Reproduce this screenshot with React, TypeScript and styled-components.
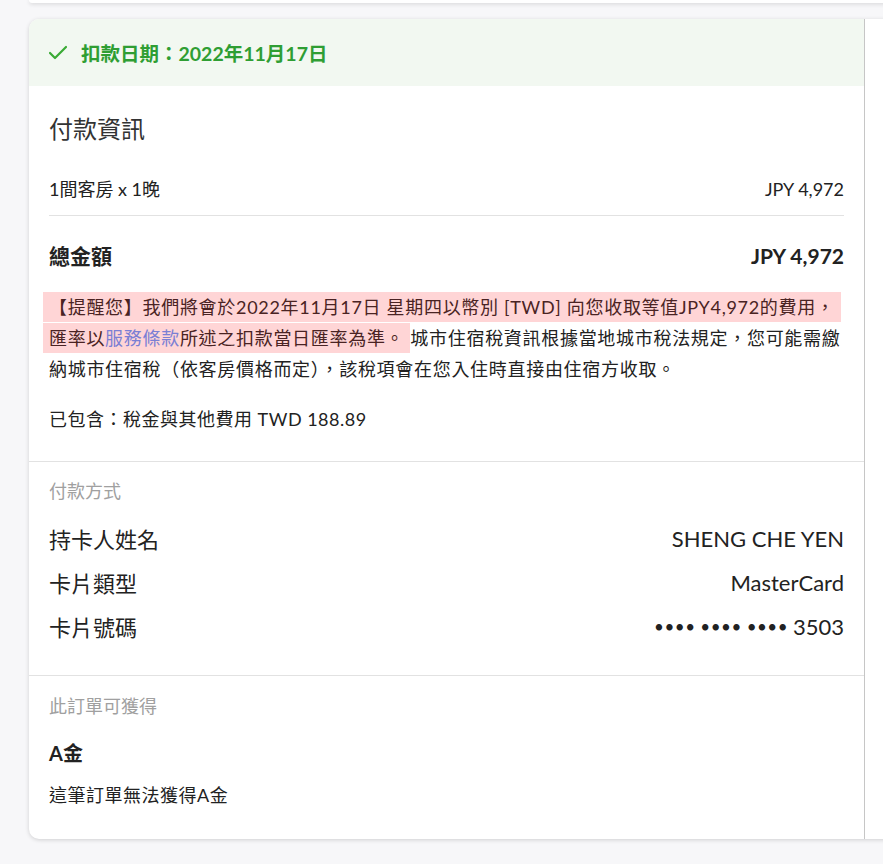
import React from "react";
import styled, {createGlobalStyle} from "styled-components";
import {Check} from "lucide-react";

const text = "#222222";
const muted = "#a0a0a0";
const line = "#e2e2e2";
const green = "#2f9e33";

const GlobalStyle = createGlobalStyle`
  html, body {
    margin: 0;
    padding: 0;
    background: #f7f7f9;
    overflow: hidden;
  }
  body {
    font-family: Lato, "Noto Sans CJK TC", "Noto Sans", sans-serif;
    color: ${text};
  }
`;

const Page = styled.div`
  width: 883px;
  height: 864px;
  padding-left: 29px;
  box-sizing: border-box;
  overflow: hidden;
`;

const PrevCard = styled.div`
  width: 880px;
  height: 3px;
  background: #ffffff;
  border-radius: 0 0 10px 10px;
  box-shadow: 0 1px 4px rgba(0, 0, 0, 0.16);
  margin-bottom: 16px;
`;

const Card = styled.div`
  display: flex;
  width: 880px;
  background: #ffffff;
  border-radius: 10px;
  box-shadow: 0 1px 4px rgba(0, 0, 0, 0.16);
  overflow: hidden;
`;

const MainColumn = styled.div`
  width: 835px;
  border-right: 1px solid #c6c6c6;
  flex-shrink: 0;
`;

const SideColumn = styled.div`
  flex: 1;
  background: #ffffff;
`;

const Banner = styled.div`
  display: flex;
  align-items: center;
  gap: 11px;
  height: 67px;
  padding: 0 17px;
  background: #f2f8f1;
  color: ${green};
  font-size: 19.5px;
  font-weight: 700;
`;

const Section = styled.div<{$top: number; $bottom: number; $last?: boolean}>`
  padding: ${(p) => p.$top}px 20px ${(p) => p.$bottom}px;
  border-bottom: ${(p) => (p.$last ? "none" : `1px solid ${line}`)};
`;

const Title = styled.div`
  font-size: 24px;
  line-height: 32px;
  font-weight: 400;
  color: #333;
`;

const ItemRow = styled.div`
  display: flex;
  justify-content: space-between;
  font-size: 18px;
  line-height: 26px;
  padding: 31px 0 13px;
  border-bottom: 1px solid ${line};
`;

const TotalRow = styled.div`
  display: flex;
  justify-content: space-between;
  font-size: 21px;
  line-height: 28px;
  font-weight: 700;
  padding-top: 26px;
`;

const Notice = styled.p`
  margin: 22px 0 0;
  font-size: 18px;
  line-height: 31px;
  letter-spacing: 0.7px;
  color: ${text};
`;

const Highlight = styled.span`
  background: #ffd5d6;
  color: #4a2323;
  padding: 4px 6px;
  margin-left: -6px;
  box-decoration-break: clone;
  -webkit-box-decoration-break: clone;
`;

const TermsLink = styled.a`
  color: #7b7fd4;
  text-decoration: none;
`;

const Included = styled.div`
  margin-top: 21px;
  font-size: 18px;
  line-height: 26px;
  letter-spacing: 0.5px;
`;

const Label = styled.div`
  font-size: 18px;
  line-height: 24px;
  color: ${muted};
`;

const DetailList = styled.div`
  margin-top: 13px;
`;

const DetailRow = styled.div`
  display: flex;
  justify-content: space-between;
  align-items: center;
  height: 44px;
  font-size: 22px;
`;

const Dots = styled.span`
  font-size: 17px;
  letter-spacing: 0.5px;
  vertical-align: 2px;
`;

const RewardName = styled.div`
  margin-top: 21px;
  font-size: 20px;
  line-height: 28px;
  font-weight: 700;
`;

const RewardNote = styled.div`
  margin-top: 15px;
  font-size: 18px;
  line-height: 26px;
  letter-spacing: 0.5px;
`;

const details = [
  {label: "持卡人姓名", value: "SHENG CHE YEN"},
  {label: "卡片類型", value: "MasterCard"},
];

const App = () => {
  return (
    <Page>
      <GlobalStyle />
      <PrevCard />
      <Card>
        <MainColumn>
          <Banner>
            <Check size={24} strokeWidth={2.2} color="#3aaa35" />
            <span>扣款日期：2022年11月17日</span>
          </Banner>

          <Section $top={27} $bottom={29}>
            <Title>付款資訊</Title>
            <ItemRow>
              <span>1間客房 x 1晚</span>
              <span>JPY 4,972</span>
            </ItemRow>
            <TotalRow>
              <span>總金額</span>
              <span>JPY 4,972</span>
            </TotalRow>
            <Notice>
              <Highlight>
                【提醒您】我們將會於2022年11月17日 星期四以幣別 [TWD] 向您收取等值JPY4,972的費用，匯率以
                <TermsLink href="#">服務條款</TermsLink>
                所述之扣款當日匯率為準。
              </Highlight>
              城市住宿稅資訊根據當地城市稅法規定，您可能需繳納城市住宿稅（依客房價格而定），該稅項會在您入住時直接由住宿方收取。
            </Notice>
            <Included>已包含：稅金與其他費用 TWD 188.89</Included>
          </Section>

          <Section $top={17} $bottom={27}>
            <Label>付款方式</Label>
            <DetailList>
              {details.map((d) => (
                <DetailRow key={d.label}>
                  <span>{d.label}</span>
                  <span>{d.value}</span>
                </DetailRow>
              ))}
              <DetailRow>
                <span>卡片號碼</span>
                <span>
                  <Dots>•••• •••• •••• </Dots>3503
                </span>
              </DetailRow>
            </DetailList>
          </Section>

          <Section $top={18} $bottom={31} $last>
            <Label>此訂單可獲得</Label>
            <RewardName>A金</RewardName>
            <RewardNote>這筆訂單無法獲得A金</RewardNote>
          </Section>
        </MainColumn>
        <SideColumn />
      </Card>
    </Page>
  );
};

export default App;
